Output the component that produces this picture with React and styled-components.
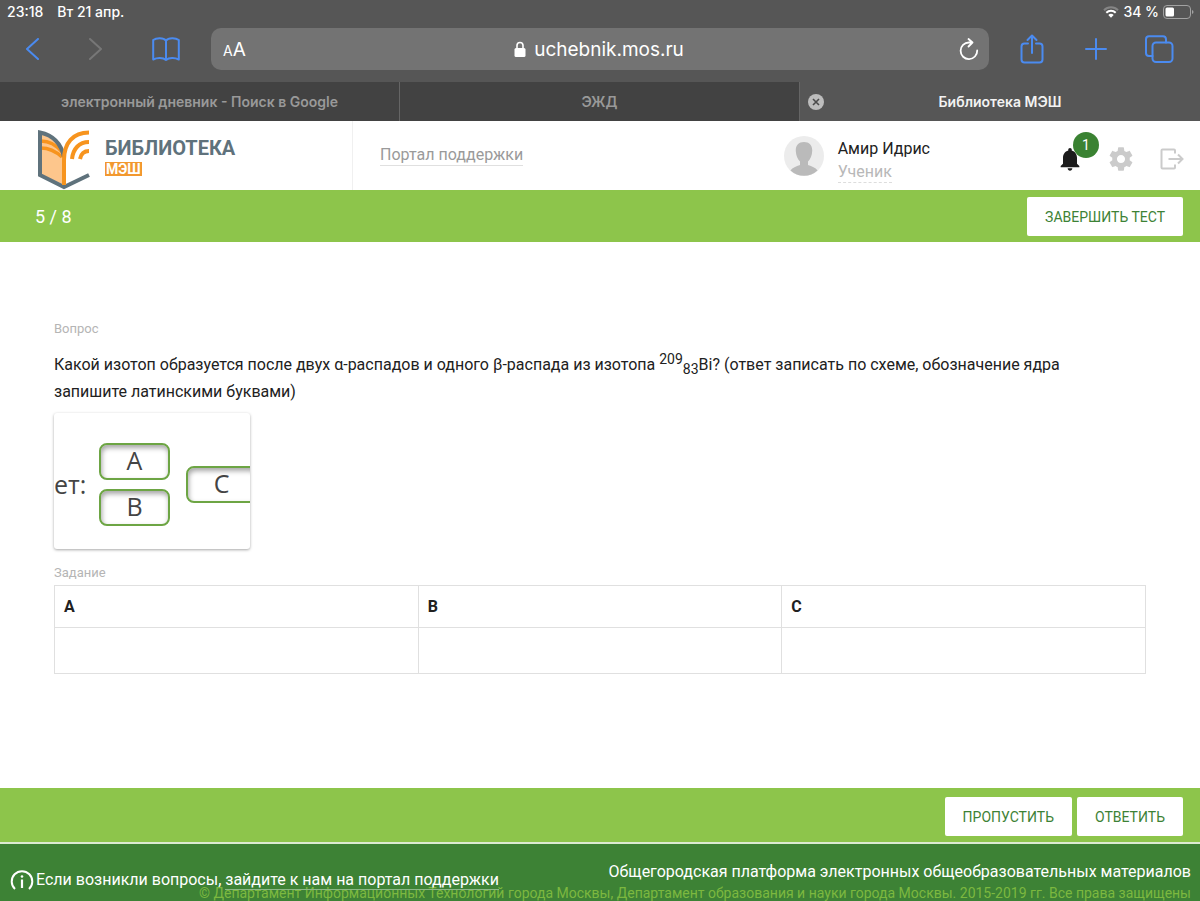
import React from 'react';
import { useState } from 'react';
import styled, { createGlobalStyle } from 'styled-components';

const columns = ['A', 'B', 'C'];

export default function App() {
    const [answers, setAnswers] = useState({ A: '', B: '', C: '' });

    const handleChange = (e) => {
        setAnswers({ ...answers, [e.target.name]: e.target.value });
    };

    return (
        <>
            <GlobalStyle />
            <Page>
                <Browser />
                <Header />
                <ActionBar>
                    <Counter>5 / 8</Counter>
                    <ActionButton type="button">ЗАВЕРШИТЬ ТЕСТ</ActionButton>
                </ActionBar>
                <Main>
                    <Label>Вопрос</Label>
                    <Question>
                        Какой изотоп образуется после двух α-распадов и одного β-распада из изотопа{' '}
                        <sup>209</sup>
                        <sub>83</sub>Bi? (ответ записать по схеме, обозначение ядра запишите
                        латинскими буквами)
                    </Question>
                    <Scheme>
                        <SchemeText>ет:</SchemeText>
                        <SchemeColumn>
                            <SchemeBox>A</SchemeBox>
                            <SchemeBox>B</SchemeBox>
                        </SchemeColumn>
                        <SchemeBox>C</SchemeBox>
                    </Scheme>
                    <Label>Задание</Label>
                    <AnswerTable>
                        <thead>
                            <tr>
                                {columns.map((name) => (
                                    <HeadCell key={name} id={`col-${name}`} scope="col">
                                        {name}
                                    </HeadCell>
                                ))}
                            </tr>
                        </thead>
                        <tbody>
                            <tr>
                                {columns.map((name) => (
                                    <Cell key={name}>
                                        <AnswerInput
                                            type="text"
                                            name={name}
                                            aria-labelledby={`col-${name}`}
                                            value={answers[name]}
                                            onChange={handleChange}
                                        />
                                    </Cell>
                                ))}
                            </tr>
                        </tbody>
                    </AnswerTable>
                </Main>
                <ActionBar $bottom>
                    <ActionButton type="button">ПРОПУСТИТЬ</ActionButton>
                    <ActionButton type="button">ОТВЕТИТЬ</ActionButton>
                </ActionBar>
                <Footer>
                    <Help>
                        <svg width="24" height="20" viewBox="0 0 24 20" fill="none" stroke="#fff">
                            <path d="M5 19A10.3 10.3 0 1 1 19 19" strokeWidth="2" />
                            <path d="M12 9.500V18" strokeWidth="2.200" />
                            <circle cx="12" cy="6.500" r="1.300" fill="#fff" stroke="none" />
                        </svg>
                        <span>
                            Если возникли вопросы,{' '}
                            <HelpLink href="#support">зайдите к нам на портал поддержки</HelpLink>
                        </span>
                    </Help>
                    <Legal>
                        <Platform>
                            Общегородская платформа электронных общеобразовательных материалов
                        </Platform>
                        <Copyright>
                            © Департамент Информационных Технологий города Москвы, Департамент
                            образования и науки города Москвы. 2015-2019 гг. Все права защищены
                        </Copyright>
                    </Legal>
                </Footer>
            </Page>
        </>
    );
}

function Browser() {
    return (
        <BrowserTop>
            <StatusBar>
                <span>23:18</span>
                <span>Вт 21 апр.</span>
                <Battery>
                    <svg width="16" height="12" viewBox="0 0 16 12" fill="none">
                        <path d="M1 4.200A10 10 0 0 1 15 4.200" stroke="#858585" strokeWidth="2" />
                        <path d="M3.300 6.700A6.800 6.800 0 0 1 12.700 6.700" stroke="#fff" strokeWidth="2" />
                        <path d="M8 11.800L5.300 9.100A3.900 3.900 0 0 1 10.700 9.100Z" fill="#fff" />
                    </svg>
                    <span>34 %</span>
                    <svg width="31" height="14" viewBox="0 0 31 14" fill="none">
                        <rect x=".5" y=".5" width="27" height="13" rx="3.500" stroke="#a2a2a2" />
                        <rect x="2.500" y="2.500" width="8.500" height="9" rx="1.500" fill="#fff" />
                        <path d="M29 5V9Q30.500 8.500 30.500 7T29 5Z" fill="#a2a2a2" />
                    </svg>
                </Battery>
            </StatusBar>
            <Toolbar>
                <ToolButton type="button" aria-label="Назад">
                    <svg width="14" height="22" viewBox="0 0 14 22">
                        <path d="M13 1L2 11L13 21" />
                    </svg>
                </ToolButton>
                <ToolButton type="button" aria-label="Вперёд" disabled>
                    <svg width="14" height="22" viewBox="0 0 14 22">
                        <path d="M1 1L12 11L1 21" />
                    </svg>
                </ToolButton>
                <ToolButton type="button" aria-label="Закладки">
                    <svg width="28" height="24" viewBox="0 0 28 24">
                        <path d="M14 3.500C11.500.5 4.500.5 1.200 3V22.500C5 20.500 11 20.300 14 23C17 20.300 23 20.500 26.800 22.500V3C23.500.5 16.500.5 14 3.500ZM14 3.500V23" />
                    </svg>
                </ToolButton>
                <AddressBar>
                    <TextSize type="button">
                        <small>A</small>A
                    </TextSize>
                    <Address type="button">
                        <svg width="12" height="17" viewBox="0 0 12 17">
                            <path d="M3 8V4.500A3 3 0 0 1 9 4.500V8" fill="none" stroke="#fff" strokeWidth="1.600" />
                            <rect x=".5" y="7" width="11" height="9" rx="1.500" fill="#fff" />
                        </svg>
                        uchebnik.mos.ru
                    </Address>
                    <Reload type="button" aria-label="Обновить">
                        <svg width="20" height="24" viewBox="0 0 20 24" fill="none" stroke="#fff" strokeWidth="1.800" strokeLinecap="round" strokeLinejoin="round">
                            <path d="M18.200 13.500A8.300 8.300 0 1 1 10 5.500H13.500M9.500 2L13.500 5.500L9.500 9.500" />
                        </svg>
                    </Reload>
                </AddressBar>
                <ToolButton type="button" aria-label="Поделиться">
                    <svg width="24" height="30" viewBox="0 0 24 30">
                        <path d="M8 9.500H4.500Q1.500 9.500 1.500 12.500V25.500Q1.500 28.500 4.500 28.500H19.500Q22.500 28.500 22.500 25.500V12.500Q22.500 9.500 19.500 9.500H16M12 19V1.500M7.500 6L12 1.500L16.500 6" />
                    </svg>
                </ToolButton>
                <ToolButton type="button" aria-label="Новая вкладка">
                    <svg width="22" height="22" viewBox="0 0 22 22">
                        <path d="M11 1V21M1 11H21" />
                    </svg>
                </ToolButton>
                <ToolButton type="button" aria-label="Вкладки">
                    <svg width="30" height="28" viewBox="0 0 30 28">
                        <rect x="8.500" y="7.500" width="20" height="19.500" rx="3.500" />
                        <path d="M8.500 21H5Q2 21 2 18V4.500Q2 1.200 5 1.200H19Q22 1.200 22 4.500V7.500" />
                    </svg>
                </ToolButton>
            </Toolbar>
            <Tabs>
                <Tab>
                    <TabTitle type="button">электронный дневник - Поиск в Google</TabTitle>
                </Tab>
                <Tab>
                    <TabTitle type="button">ЭЖД</TabTitle>
                </Tab>
                <Tab $active>
                    <CloseTab type="button" aria-label="Закрыть">
                        <svg width="16" height="16" viewBox="0 0 16 16">
                            <circle cx="8" cy="8" r="8" fill="#bdbdbd" />
                            <path d="M5 5L11 11M11 5L5 11" stroke="#4c4c4c" strokeWidth="1.600" />
                        </svg>
                    </CloseTab>
                    <TabTitle type="button">Библиотека МЭШ</TabTitle>
                </Tab>
            </Tabs>
        </BrowserTop>
    );
}

function Header() {
    return (
        <HeaderBar>
            <Logo href="#library">
                <svg width="54" height="61" viewBox="0 0 54 61" fill="none">
                    <path d="M4 4L20 13L27 28V56L4 45Z" fill="#fdc68c" />
                    <path d="M4 12Q16 12 25 23M4 19Q15 19 25 28" stroke="#f7941e" strokeWidth="3.500" />
                    <path d="M27 28C24 14 15 6 3 3.500V46L27 58L52 46" stroke="#5f727c" strokeWidth="4" />
                    <path d="M27 56V31C27 14 36 3.500 52 3.500" stroke="#f7941e" strokeWidth="4" />
                    <path d="M35 30C36 20 42 13 52 13M43 30C44 25 47 22 52 22" stroke="#f7941e" strokeWidth="4" />
                </svg>
                <LogoText>
                    <LogoName>БИБЛИОТЕКА</LogoName>
                    <LogoTag>МЭШ</LogoTag>
                </LogoText>
            </Logo>
            <SupportLink href="#support">Портал поддержки</SupportLink>
            <Profile>
                <svg width="40" height="40" viewBox="0 0 40 40">
                    <circle cx="20" cy="20" r="20" fill="#ececec" />
                    <path d="M20 6C14.500 6 11.500 9.500 11.800 15C12 19.500 13.500 23 16 25.500V29C12 30.500 8.500 31.500 6.500 34.500A20 20 0 0 0 33.500 34.500C31.500 31.500 28 30.500 24 29V25.500C26.500 23 28 19.500 28.200 15C28.500 9.500 25.500 6 20 6Z" fill="#bababa" />
                </svg>
                <ProfileText>
                    <span>Амир Идрис</span>
                    <Role href="#role">Ученик</Role>
                </ProfileText>
            </Profile>
            <IconButton type="button" aria-label="Уведомления">
                <svg width="28" height="28" viewBox="0 0 24 24" fill="#1c1c1c">
                    <path d="M12 22c1.100 0 2-.9 2-2h-4c0 1.100.89 2 2 2zm6-6v-5c0-3.070-1.640-5.640-4.500-6.320V4c0-.83-.67-1.500-1.500-1.500s-1.500.67-1.500 1.500v.68C7.630 5.360 6 7.920 6 11v5l-2 2v1h16v-1l-2-2z" />
                </svg>
                <Badge>1</Badge>
            </IconButton>
            <IconButton type="button" aria-label="Настройки">
                <svg width="28" height="28" viewBox="0 0 24 24" fill="#cbcbcb">
                    <path d="M19.430 12.980c.04-.32.07-.64.07-.98s-.03-.66-.07-.98l2.110-1.650c.19-.15.24-.42.12-.64l-2-3.460c-.12-.22-.39-.3-.61-.22l-2.490 1c-.52-.4-1.080-.73-1.690-.98l-.38-2.650C14.460 2.180 14.250 2 14 2h-4c-.25 0-.46.18-.49.42l-.38 2.650c-.61.25-1.170.59-1.690.98l-2.490-1c-.23-.09-.49 0-.61.22l-2 3.460c-.13.22-.07.49.12.64l2.110 1.650c-.04.32-.07.65-.07.98s.03.66.07.98l-2.110 1.650c-.19.15-.24.42-.12.64l2 3.460c.12.22.39.3.61.22l2.490-1c.52.4 1.080.73 1.690.98l.38 2.650c.03.24.24.42.49.42h4c.25 0 .46-.18.49-.42l.38-2.650c.61-.25 1.170-.59 1.690-.98l2.490 1c.23.09.49 0 .61-.22l2-3.460c.12-.22.07-.49-.12-.64l-2.110-1.650zM12 15.500c-1.930 0-3.500-1.570-3.500-3.500s1.570-3.500 3.500-3.500 3.500 1.570 3.500 3.500-1.570 3.500-3.500 3.500z" />
                </svg>
            </IconButton>
            <IconButton type="button" aria-label="Выйти">
                <svg width="24" height="22" viewBox="0 0 24 22" fill="none" stroke="#cbcbcb" strokeWidth="2">
                    <path d="M15 5.500V2.500Q15 1.500 14 1.500H2.500Q1.500 1.500 1.500 2.500V19.500Q1.500 20.500 2.500 20.500H14Q15 20.500 15 19.500V16.500M8.500 11H22M18 6.500L22.500 11L18 15.500" />
                </svg>
            </IconButton>
        </HeaderBar>
    );
}

const GlobalStyle = createGlobalStyle`
    * {
        box-sizing: border-box;
    }

    body {
        margin: 0;
        background-color: #fff;
        color: #212121;
        font-family: Roboto, sans-serif;
        font-size: 16px;
    }

    button {
        padding: 0;
        border: none;
        background: none;
        font-family: inherit;
        cursor: pointer;
    }

    a {
        color: inherit;
        text-decoration: none;
    }

    svg {
        display: block;
        flex-shrink: 0;
    }
`;

const Page = styled.div`
    display: flex;
    flex-direction: column;
    min-height: 100vh;
`;

const BrowserTop = styled.div`
    background-color: #565656;
    color: white;
    font-family: Inter, sans-serif;
`;

const StatusBar = styled.div`
    display: flex;
    align-items: center;
    gap: 14px;
    height: 24px;
    padding: 0 6px 1px 7px;
    font-size: 14px;
    font-weight: 500;
`;

const Battery = styled.div`
    display: flex;
    align-items: center;
    gap: 4px;
    margin-left: auto;
`;

const Toolbar = styled.div`
    display: grid;
    grid-template-columns: 64px 64px 76px 1fr 86px 42px 83px;
    height: 58px;
    padding: 4px 0 12px;
`;

const ToolButton = styled.button`
    display: flex;
    align-items: center;
    justify-content: center;

    svg {
        fill: none;
        stroke: #4b8bf0;
        stroke-width: 2;
        stroke-linecap: round;
        stroke-linejoin: round;
    }

    &:disabled svg {
        stroke: #777;
    }
`;

const AddressBar = styled.div`
    display: grid;
    grid-template-columns: 56px 1fr 60px;
    margin-left: 7px;
    padding: 0 10px 0 12px;
    border-radius: 10px;
    background-color: #737373;
`;

const TextSize = styled.button`
    color: white;
    font-size: 19px;
    text-align: left;

    small {
        font-size: 14px;
    }
`;

const Address = styled.button`
    display: flex;
    align-items: center;
    justify-content: center;
    gap: 8px;
    color: white;
    font-size: 19px;
`;

const Reload = styled.button`
    display: flex;
    align-items: center;
    justify-content: flex-end;
`;

const Tabs = styled.div`
    display: grid;
    grid-template-columns: repeat(3, 1fr);
    height: 39px;
`;

const Tab = styled.div`
    display: flex;
    align-items: center;
    padding: 0 ${(props) => (props.$active ? '24px' : '8px')} 0 8px;
    border-right: 1px solid #656565;
    background-color: ${(props) => (props.$active ? '#565656' : '#424242')};
    color: ${(props) => (props.$active ? '#f2f2f2' : '#999')};

    &:last-child {
        border-right: none;
    }
`;

const TabTitle = styled.button`
    flex: 1;
    color: inherit;
    font-size: 14px;
    font-weight: 600;
`;

const CloseTab = styled.button`
    width: 16px;
    height: 16px;
`;

const HeaderBar = styled.header`
    display: flex;
    align-items: center;
    height: 69px;
    padding-right: 14px;
`;

const Logo = styled.a`
    display: flex;
    align-items: center;
    gap: 14px;
    align-self: stretch;
    width: 353px;
    padding: 7px 0 0 37px;
    border-right: 1px solid #f0f0f0;
`;

const LogoText = styled.div`
    display: flex;
    flex-direction: column;
    align-items: flex-start;
    gap: 2px;
    margin-bottom: 6px;
    font-weight: 700;
`;

const LogoName = styled.span`
    color: #5f727c;
    font-size: 20px;
    line-height: 24px;
`;

const LogoTag = styled.span`
    padding: 0 1px;
    background-color: #f2982f;
    color: white;
    font-size: 14px;
    line-height: 14px;
`;

const SupportLink = styled.a`
    margin-left: 27px;
    border-bottom: 1px solid #e0e0e0;
    color: #9a9a9a;
    font-size: 16px;
    line-height: 20px;
`;

const Profile = styled.div`
    display: flex;
    align-items: center;
    gap: 14px;
    margin-left: auto;
    margin-right: 126px;
`;

const ProfileText = styled.div`
    display: flex;
    flex-direction: column;
    align-items: flex-start;
    gap: 3px;
    padding-top: 10px;
    font-size: 16px;
    line-height: 20px;
`;

const Role = styled.a`
    border-bottom: 1px dashed #ddd;
    color: #b8b8b8;
`;

const IconButton = styled.button`
    position: relative;
    display: flex;
    align-items: center;
    justify-content: center;
    width: 28px;
    height: 28px;
    margin-top: 6px;

    & + & {
        margin-left: 23px;
    }
`;

const Badge = styled.span`
    position: absolute;
    top: -13px;
    right: -15px;
    width: 26px;
    height: 26px;
    border-radius: 50%;
    background-color: #3a8232;
    color: white;
    font-size: 14px;
    line-height: 26px;
`;

const ActionBar = styled.div`
    display: flex;
    align-items: center;
    justify-content: ${(props) => (props.$bottom ? 'flex-end' : 'space-between')};
    gap: 5px;
    height: ${(props) => (props.$bottom ? '54px' : '52px')};
    padding: ${(props) => (props.$bottom ? '2px' : '0')} 17px 0 35px;
    background-color: #8dc54b;
`;

const Counter = styled.span`
    color: white;
    font-size: 18px;
`;

const ActionButton = styled.button`
    height: 39px;
    padding: 2px 18px 0;
    border-radius: 2px;
    background-color: white;
    color: #3d8235;
    font-size: 14px;
`;

const Main = styled.main`
    flex: 1;
    padding: 77px 54px 40px;
`;

const Label = styled.div`
    color: #b5b5b5;
    font-size: 13px;
    line-height: 20px;
`;

const Question = styled.p`
    margin: 12px 0 8px;
    padding-right: 32px;
    font-size: 16px;
    line-height: 27px;

    sup,
    sub {
        font-size: 14px;
        line-height: 0;
    }
`;

const Scheme = styled.div`
    display: flex;
    align-items: center;
    width: 196px;
    height: 136px;
    margin-bottom: 14px;
    padding-top: 6px;
    border-radius: 3px;
    box-shadow: 0 1px 3px rgba(0, 0, 0, 0.35);
    color: #444;
    font-family: 'Open Sans', sans-serif;
    font-size: 25px;
    line-height: 31px;
    overflow: hidden;
`;

const SchemeText = styled.span`
    flex: 0 0 45px;
`;

const SchemeColumn = styled.div`
    display: flex;
    flex-direction: column;
    gap: 9px;
    margin-right: 16px;
`;

const SchemeBox = styled.div`
    flex-shrink: 0;
    width: 71px;
    height: 37px;
    border: 2px solid #6da544;
    border-radius: 8px;
    box-shadow: inset 1px 3px 5px rgba(0, 0, 0, 0.35);
    text-align: center;
`;

const AnswerTable = styled.table`
    width: 100%;
    margin-top: 2px;
    border-collapse: collapse;
    table-layout: fixed;
`;

const HeadCell = styled.th`
    height: 42px;
    padding: 0 9px;
    border: 1px solid #e0e0e0;
    text-align: left;
`;

const Cell = styled.td`
    height: 46px;
    padding: 0;
    border: 1px solid #e0e0e0;
`;

const AnswerInput = styled.input`
    display: block;
    width: 100%;
    height: 45px;
    padding: 0 9px;
    border: none;
    outline: none;
    background: none;
    font: inherit;
`;

/* both blocks share one cell, the copyright line runs under the help text */
const Footer = styled.footer`
    display: grid;
    height: 59px;
    padding: 0 9px 0 10px;
    border-top: 2px solid #dcebd2;
    background-color: #3d8235;
    overflow: hidden;
`;

const Help = styled.div`
    grid-area: 1 / 1;
    z-index: 1;
    display: flex;
    align-items: center;
    justify-self: start;
    gap: 2px;
    padding-top: 12px;
    color: white;
    font-size: 16px;
    line-height: 20px;
`;

const HelpLink = styled.a`
    border-bottom: 1px solid #8cb886;
`;

const Legal = styled.div`
    grid-area: 1 / 1;
    padding-top: 17px;
    text-align: right;
    white-space: nowrap;
`;

const Platform = styled.div`
    color: white;
    font-size: 16px;
    line-height: 22px;
`;

const Copyright = styled.div`
    color: #7cb83f;
    font-size: 14px;
    line-height: 20px;
`;
